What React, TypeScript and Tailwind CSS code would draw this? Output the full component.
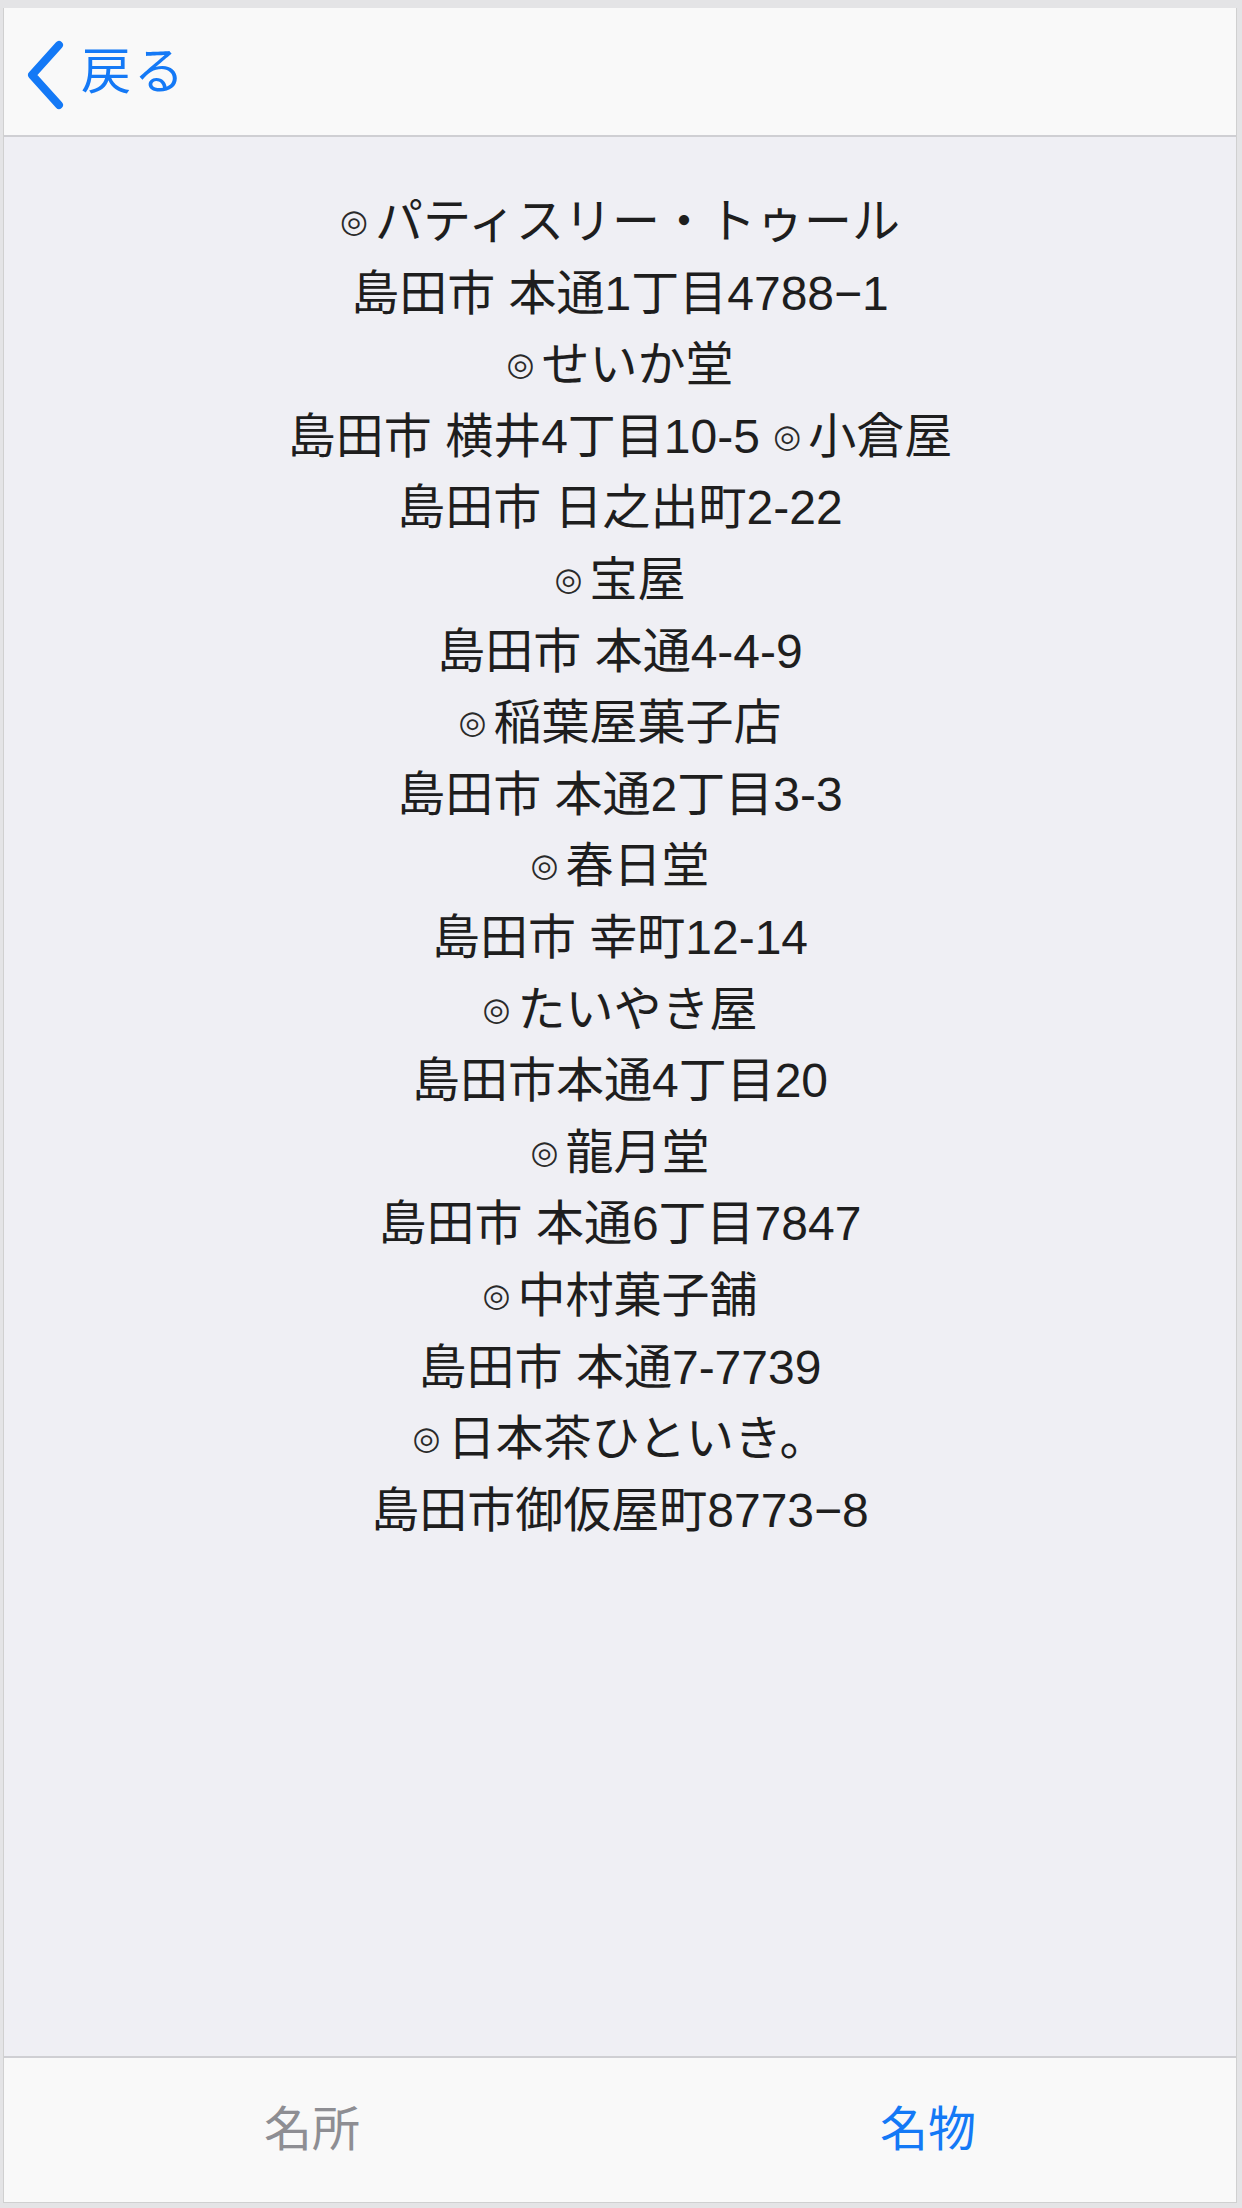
import React from "react";

const lines: { text: string; mark?: boolean; extra?: string }[] = [
  { text: "パティスリー・トゥール", mark: true },
  { text: "島田市 本通1丁目4788−1" },
  { text: "せいか堂", mark: true },
  { text: "島田市 横井4丁目10-5 ", extra: "小倉屋" },
  { text: "島田市 日之出町2-22" },
  { text: "宝屋", mark: true },
  { text: "島田市 本通4-4-9" },
  { text: "稲葉屋菓子店", mark: true },
  { text: "島田市 本通2丁目3-3" },
  { text: "春日堂", mark: true },
  { text: "島田市 幸町12-14" },
  { text: "たいやき屋", mark: true },
  { text: "島田市本通4丁目20" },
  { text: "龍月堂", mark: true },
  { text: "島田市 本通6丁目7847" },
  { text: "中村菓子舗", mark: true },
  { text: "島田市 本通7-7739" },
  { text: "日本茶ひといき。", mark: true },
  { text: "島田市御仮屋町8773−8" },
];

function Mark() {
  return (
    <span className="font-['DejaVu_Sans',sans-serif] font-bold text-[32px] text-[#2a2a2a] mr-[7px] align-[6px]">◎</span>
  );
}

export default function App() {
  return (
    <div className="w-[1242px] h-[2208px] bg-[#e4e4e6] pl-[3px] pt-[8px] font-['Liberation_Sans','Noto_Sans_CJK_JP',sans-serif]">
      <div className="w-[1234px] h-[2195px] flex flex-col border-l border-r border-[#d0d0d0] bg-[#efeff4]">
        {/* Header */}
        <div className="h-[129px] shrink-0 bg-[#f9f9f9] border-b-2 border-[#cfcfd3] flex items-center pl-[21px]">
          <svg width="40" height="70" viewBox="0 0 40 70" className="mt-[6px]">
            <path d="M34 5 L7 35 L34 65" fill="none" stroke="#1479f6" strokeWidth="8" strokeLinecap="round" strokeLinejoin="round" />
          </svg>
          <span className="ml-[16px] text-[50px] tracking-[3px] leading-none text-[#1479f6]">戻る</span>
        </div>
        {/* Content */}
        <div className="flex-1 pt-[49px] flex flex-col items-center text-[48px] leading-[71.6px] text-[#1e1e1e]">
          {lines.map((l, i) => (
            <div key={i} className="whitespace-nowrap">
              {l.mark && <Mark />}
              {l.text}
              {l.extra && (
                <>
                  <Mark />
                  {l.extra}
                </>
              )}
            </div>
          ))}
        </div>
        {/* Tab bar */}
        <div className="h-[147px] shrink-0 bg-[#f9f9f9] border-t-2 border-[#cfcfd3] border-b border-b-[#d0d0d0] grid grid-cols-2">
          <div className="flex items-center justify-center text-[48px] text-[#8e8e93]">名所</div>
          <div className="flex items-center justify-center text-[48px] text-[#1479f6]">名物</div>
        </div>
      </div>
    </div>
  );
}
